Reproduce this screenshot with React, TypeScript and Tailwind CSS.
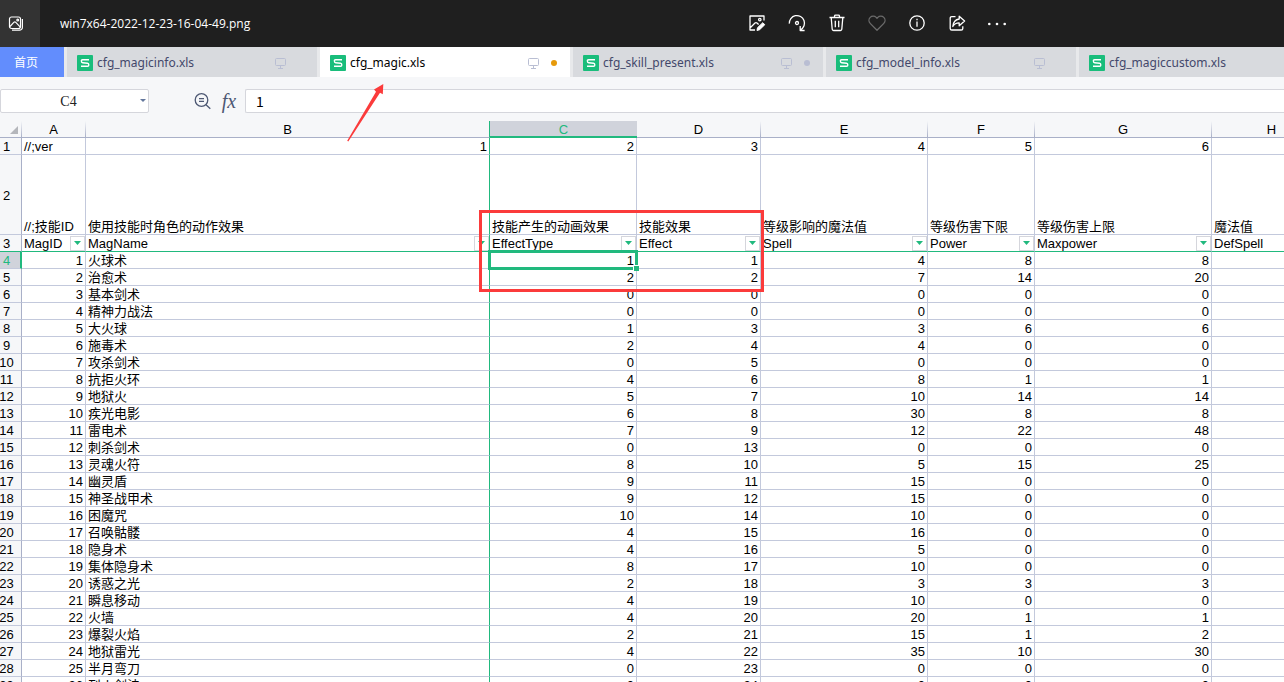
import React from 'react';

type Row = [number, string, number, number, number, number, number];

const rows: Row[] = [
  [1, '火球术', 1, 1, 4, 8, 8],
  [2, '治愈术', 2, 2, 7, 14, 20],
  [3, '基本剑术', 0, 0, 0, 0, 0],
  [4, '精神力战法', 0, 0, 0, 0, 0],
  [5, '大火球', 1, 3, 3, 6, 6],
  [6, '施毒术', 2, 4, 4, 0, 0],
  [7, '攻杀剑术', 0, 5, 0, 0, 0],
  [8, '抗拒火环', 4, 6, 8, 1, 1],
  [9, '地狱火', 5, 7, 10, 14, 14],
  [10, '疾光电影', 6, 8, 30, 8, 8],
  [11, '雷电术', 7, 9, 12, 22, 48],
  [12, '刺杀剑术', 0, 13, 0, 0, 0],
  [13, '灵魂火符', 8, 10, 5, 15, 25],
  [14, '幽灵盾', 9, 11, 15, 0, 0],
  [15, '神圣战甲术', 9, 12, 15, 0, 0],
  [16, '困魔咒', 10, 14, 10, 0, 0],
  [17, '召唤骷髅', 4, 15, 16, 0, 0],
  [18, '隐身术', 4, 16, 5, 0, 0],
  [19, '集体隐身术', 8, 17, 10, 0, 0],
  [20, '诱惑之光', 2, 18, 3, 3, 3],
  [21, '瞬息移动', 4, 19, 10, 0, 0],
  [22, '火墙', 4, 20, 20, 1, 1],
  [23, '爆裂火焰', 2, 21, 15, 1, 2],
  [24, '地狱雷光', 4, 22, 35, 10, 30],
  [25, '半月弯刀', 0, 23, 0, 0, 0],
  [26, '烈火剑法', 0, 24, 0, 0, 0],
];

const columns = ['A', 'B', 'C', 'D', 'E', 'F', 'G', 'H'];
const widths = ['w-[64px]', 'w-[404px]', 'w-[147px]', 'w-[124px]', 'w-[167px]', 'w-[107px]', 'w-[177px]', 'w-[120px]'];
const versions = ['//;ver', 1, 2, 3, 4, 5, 6, ''];
const captions = ['//;技能ID', '使用技能时角色的动作效果', '技能产生的动画效果', '技能效果', '等级影响的魔法值', '等级伤害下限', '等级伤害上限', '魔法值'];
const fields = ['MagID', 'MagName', 'EffectType', 'Effect', 'Spell', 'Power', 'Maxpower', 'DefSpell'];

const tabs = [
  { name: 'cfg_magicinfo.xls', active: false, dot: false },
  { name: 'cfg_magic.xls', active: true, dot: true },
  { name: 'cfg_skill_present.xls', active: false, dot: true },
  { name: 'cfg_model_info.xls', active: false, dot: false },
  { name: 'cfg_magiccustom.xls', active: false, dot: false },
];

function ViewerButton({ label, dim, children }: { label: string; dim?: boolean; children: React.ReactNode }) {
  return (
    <button aria-label={label} className={dim ? 'flex w-10 items-center justify-center text-[#6b6b6b]' : 'flex w-10 items-center justify-center text-white'}>
      <svg width="18" height="18" viewBox="0 0 18 18" fill="none" stroke="currentColor" strokeWidth="1.3" strokeLinejoin="round">
        {children}
      </svg>
    </button>
  );
}

function ViewerBar() {
  return (
    <header className="relative flex h-[47px] shrink-0 bg-[#1f1f1f] text-white">
      <button aria-label="Photos" className="flex w-10 items-center bg-[#333333] pl-2">
        <svg width="16" height="16" viewBox="0 0 16 16" fill="none" stroke="white" strokeWidth="1.2">
          <rect x="1.5" y="1" width="11" height="11.5" rx="2" />
          <path d="M2 10.5 6 6.2q.8-.7 1.6 0l4.7 5M14.4 3v8.2a3 3 0 0 1-3 3H4" />
          <circle cx="9.7" cy="4" r=".9" />
        </svg>
      </button>
      <h1 className="flex items-center pl-5 font-['Open_Sans','Noto_Sans',sans-serif] text-[12px]">win7x64-2022-12-23-16-04-49.png</h1>
      <nav aria-label="Picture tools" className="absolute inset-y-0 left-[57.4%] flex pb-px">
        <ViewerButton label="Edit">
          <path d="M16 6.5V2H2v14h5M2.5 13.5 7 9q1-.8 2 0l1.6 1.5" />
          <circle cx="11.8" cy="5.6" r="1.2" />
          <path d="m9 16.5.5-2.8 5.3-5 2 2-5.2 5z" fill="currentColor" strokeWidth="1" />
        </ViewerButton>
        <ViewerButton label="Rotate">
          <path d="M1.3 9.6A7.6 7.6 0 1 1 12.6 15.8M12.2 11.9v4.6h4.4" />
          <circle cx="9" cy="9" r="1.5" />
        </ViewerButton>
        <ViewerButton label="Delete">
          <path d="M1.5 3.5h15M6.5 3.3V2.1Q6.6 1.2 7.5 1.2h3q.9 0 1 .9v1.2M3.2 3.6l1 11.7q.1 1.2 1.3 1.2h7q1.2 0 1.3-1.2l1-11.7M7.3 6.8v6.4M10.7 6.8v6.4" />
        </ViewerButton>
        <ViewerButton label="Favourite" dim>
          <path d="M9 16.2 2.2 9.4a4.3 4.3 0 0 1 0-6 4.2 4.2 0 0 1 6 0l.8.8.8-.8a4.2 4.2 0 0 1 6 0 4.3 4.3 0 0 1 0 6z" />
        </ViewerButton>
        <ViewerButton label="Information">
          <circle cx="9" cy="9" r="7.2" />
          <path d="M9 7.5v5.2M9 4.7v1.6" />
        </ViewerButton>
        <ViewerButton label="Share">
          <path d="M7.5 2.6H3.8q-1.6 0-1.6 1.6v10.2q0 1.6 1.6 1.6h9.4q1.6 0 1.6-1.6V12.2" />
          <path d="M11.2 2.2 16.6 7l-5.4 4.8V8.9Q7 8.8 4.8 12.5 5.5 5.7 11.2 5z" />
        </ViewerButton>
        <ViewerButton label="More">
          <g fill="currentColor" stroke="none">
            <circle cx="1.3" cy="10" r="1.3" />
            <circle cx="9" cy="10" r="1.3" />
            <circle cx="16.7" cy="10" r="1.3" />
          </g>
        </ViewerButton>
      </nav>
    </header>
  );
}

function TabBar() {
  return (
    <nav aria-label="Open files" className="flex h-[30px] shrink-0 gap-[3px] overflow-hidden bg-[#e8e9eb] font-['Noto_Sans','Noto_Sans_CJK_SC',sans-serif]">
      <button className="w-16 shrink-0 bg-[#628dfd] pr-3 font-['Noto_Sans_CJK_SC',sans-serif] text-[12px] text-white">首页</button>
      {tabs.map((tab) => (
        <button
          key={tab.name}
          className={
            tab.active
              ? 'flex w-[250px] shrink-0 items-center bg-white px-[10px] pt-px text-[12px] text-black'
              : 'flex w-[250px] shrink-0 items-center bg-[#d8dade] px-[10px] pt-px text-[12px] text-[#43486b]'
          }
        >
          <svg width="16" height="16" viewBox="0 0 16 16" className="mr-1 shrink-0">
            <rect width="16" height="16" rx="1" fill="#19bd7b" />
            <path d="M12 4.7H5.5Q4.4 4.7 4.4 6q0 1.7 1.2 1.8l5 .4q1.2.1 1.2 1.7 0 1.4-1.2 1.4H4" fill="none" stroke="white" strokeWidth="1.4" />
          </svg>
          <span className="flex-1 text-left">{tab.name}</span>
          <svg width="11" height="12" viewBox="0 0 11 12" fill="none" stroke="#b9bed3" className="mr-3 shrink-0">
            <rect x=".5" y="1.5" width="10" height="7" rx="1" />
            <path d="M5.5 8.5v3M3 11.5h5" />
          </svg>
          <span className={tab.active ? 'mr-[3px] size-[6px] rounded-full bg-[#e69a0b]' : tab.dot ? 'mr-[3px] size-[6px] rounded-full bg-[#b9bed3]' : 'mr-[3px] size-[6px]'} />
        </button>
      ))}
    </nav>
  );
}

function FormulaBar() {
  return (
    <div className="flex h-11 shrink-0 items-center bg-[#f6f7f9] pt-1">
      <div className="flex h-6 w-[149px] items-center rounded-[2px] border border-[#d5d6dc] bg-white">
        <input aria-label="Name box" defaultValue="C4" className="h-full w-full min-w-0 flex-1 bg-transparent pt-[2px] pr-1 pl-1 text-center font-['Liberation_Serif',serif] text-[14px] text-[#222] outline-none" />
        <button aria-label="Cell names" className="w-3">
          <svg width="6" height="4" viewBox="0 0 6 4" className="ml-1"><path d="M0 0h6L3 3z" fill="#63779c" /></svg>
        </button>
      </div>
      <button aria-label="Find" className="ml-[45px]">
        <svg width="18" height="18" viewBox="0 0 18 18" fill="none" stroke="#4d5873" strokeWidth="1.3">
          <circle cx="7.5" cy="8" r="6.3" />
          <path d="m12 12.7 4.3 4M5 6.7h5M5 9.3h5" />
        </svg>
      </button>
      <button aria-label="Insert function" className="ml-[9px] w-4 font-['Liberation_Serif',serif] text-[20px] leading-6 text-[#4d5873] italic">fx</button>
      <input aria-label="Formula" defaultValue="1" className="ml-2 h-6 min-w-0 flex-1 rounded-l-[2px] border border-r-0 border-[#d5d6dc] bg-white pl-[10px] font-['Noto_Sans_CJK_SC',sans-serif] text-[14px] text-black outline-none" />
    </div>
  );
}

function edge(col: number) {
  return col === 1 ? 'border-r border-r-[#21b97e]' : 'border-r border-r-[#c3c9dc]';
}

function RowHead({ n }: { n: number }) {
  return (
    <th
      scope="row"
      className={
        n === 4
          ? 'border-r-2 border-b border-r-[#21b97e] border-b-[#c3c9dc] bg-[#d0d3db] pt-[2px] pr-[7px] pb-0 pl-0 text-center font-normal text-[#21b97e]'
          : n === 3
            ? 'border-r border-b border-r-[#a9b0c8] border-b-[#21b97e] bg-[#f6f7f9] pt-[2px] pr-2 pb-0 pl-0 text-center font-normal'
            : 'border-r border-b border-r-[#a9b0c8] border-b-[#c3c9dc] bg-[#f6f7f9] pt-[2px] pr-2 pb-0 pl-0 text-center font-normal'
      }
    >
      <span className="flex justify-center">{n}</span>
    </th>
  );
}

function Sheet() {
  return (
    <div className="relative min-h-0 flex-1 overflow-hidden">
      <table className="w-[1332px] table-fixed border-separate border-spacing-0 font-['Liberation_Sans','Noto_Sans_CJK_SC',sans-serif] text-[13px] leading-[14px] text-black">
        <colgroup>
          <col className="w-[22px]" />
          {widths.map((w) => (
            <col key={w} className={w} />
          ))}
        </colgroup>
        <thead>
          <tr className="h-[17px] bg-[#f6f7f9]">
            <th aria-label="Select all" className="border-b border-b-[#a9b0c8] bg-[linear-gradient(to_bottom,transparent,#a9b0c8)] bg-[length:1px_100%] bg-right bg-no-repeat p-0">
              <svg width="8" height="8" viewBox="0 0 8 8" className="mt-px ml-[10px]"><path d="M8 0v8H0z" fill="#b4b6bb" /></svg>
            </th>
            {columns.map((c, i) => (
              <th
                key={c}
                scope="col"
                className={
                  c === 'C'
                    ? 'bg-[#d0d3db] px-0 pt-[2px] pb-px font-normal text-[#21b97e] shadow-[inset_0_-2px_0_#21b97e]'
                    : i === 1
                      ? 'border-r border-b border-r-[#21b97e] border-b-[#a9b0c8] px-0 pt-[2px] pb-0 font-normal'
                      : 'border-b border-b-[#a9b0c8] bg-[linear-gradient(to_bottom,transparent,#a9b0c8)] bg-[length:1px_100%] bg-right bg-no-repeat pt-[2px] pr-px pb-0 pl-0 font-normal'
                }
              >
                {c}
              </th>
            ))}
          </tr>
        </thead>
        <tbody>
          <tr className="h-[17px]">
            <RowHead n={1} />
            {versions.map((v, i) => (
              <td key={i} className={`${edge(i)} border-b border-b-[#c3c9dc] px-[2px] pt-[2px] pb-0 ${i ? 'text-right' : 'text-left'}`}>{v}</td>
            ))}
          </tr>
          <tr className="h-[80px]">
            <RowHead n={2} />
            {captions.map((v, i) => (
              <td key={i} className={`${edge(i)} border-b border-b-[#c3c9dc] px-[2px] py-0 align-bottom whitespace-nowrap`}>{v}</td>
            ))}
          </tr>
          <tr className="h-[17px]">
            <RowHead n={3} />
            {fields.map((v, i) => (
              <td key={i} className={`${edge(i)} border-b border-b-[#21b97e] py-0 pr-0 pl-[2px]`}>
                <div className="flex h-4 items-center justify-between">
                  <span className="pt-[2px]">{v}</span>
                  <button aria-label={`Filter ${v}`} className="flex h-[15px] w-[15px] items-center justify-center border border-[#d5d6dc] bg-white">
                    <svg width="7" height="4" viewBox="0 0 7 4"><path d="M0 0h7L3.5 4z" fill="#21b97e" /></svg>
                  </button>
                </div>
              </td>
            ))}
          </tr>
          {rows.map((r, n) => (
            <tr key={n} className="h-[17px]">
              <RowHead n={n + 4} />
              {[...r, ''].map((v, i) => (
                <td key={i} className={`${edge(i)} border-b border-b-[#c3c9dc] px-[2px] pt-[2px] pb-0 ${i === 1 ? 'text-left' : 'text-right'} ${n === 0 && i === 2 ? 'relative' : ''}`}>
                  {v}
                  {n === 0 && i === 2 && (
                    <span className="absolute -inset-x-[2px] -inset-y-[2px] border-[3px] border-[#21b97e]">
                      <span className="absolute -right-[4px] -bottom-[4px] size-[6px] border-t border-l border-white bg-[#21b97e]" />
                    </span>
                  )}
                </td>
              ))}
            </tr>
          ))}
        </tbody>
      </table>
      <div className="absolute top-[89px] left-[479px] h-[82px] w-[285px] border-[3px] border-[#fb3b3b]" />
    </div>
  );
}

export default function App() {
  return (
    <div className="relative flex h-screen flex-col overflow-hidden bg-white">
      <ViewerBar />
      <TabBar />
      <FormulaBar />
      <Sheet />
      <svg className="absolute top-[83px] left-[346px]" width="40" height="60" viewBox="0 0 40 60">
        <path d="M37.3 1 36.8 11.2 34 9.8 2.3 58.5 1.2 57.8 30 8.7 28 6.5z" fill="#fb3b3b" />
      </svg>
    </div>
  );
}
